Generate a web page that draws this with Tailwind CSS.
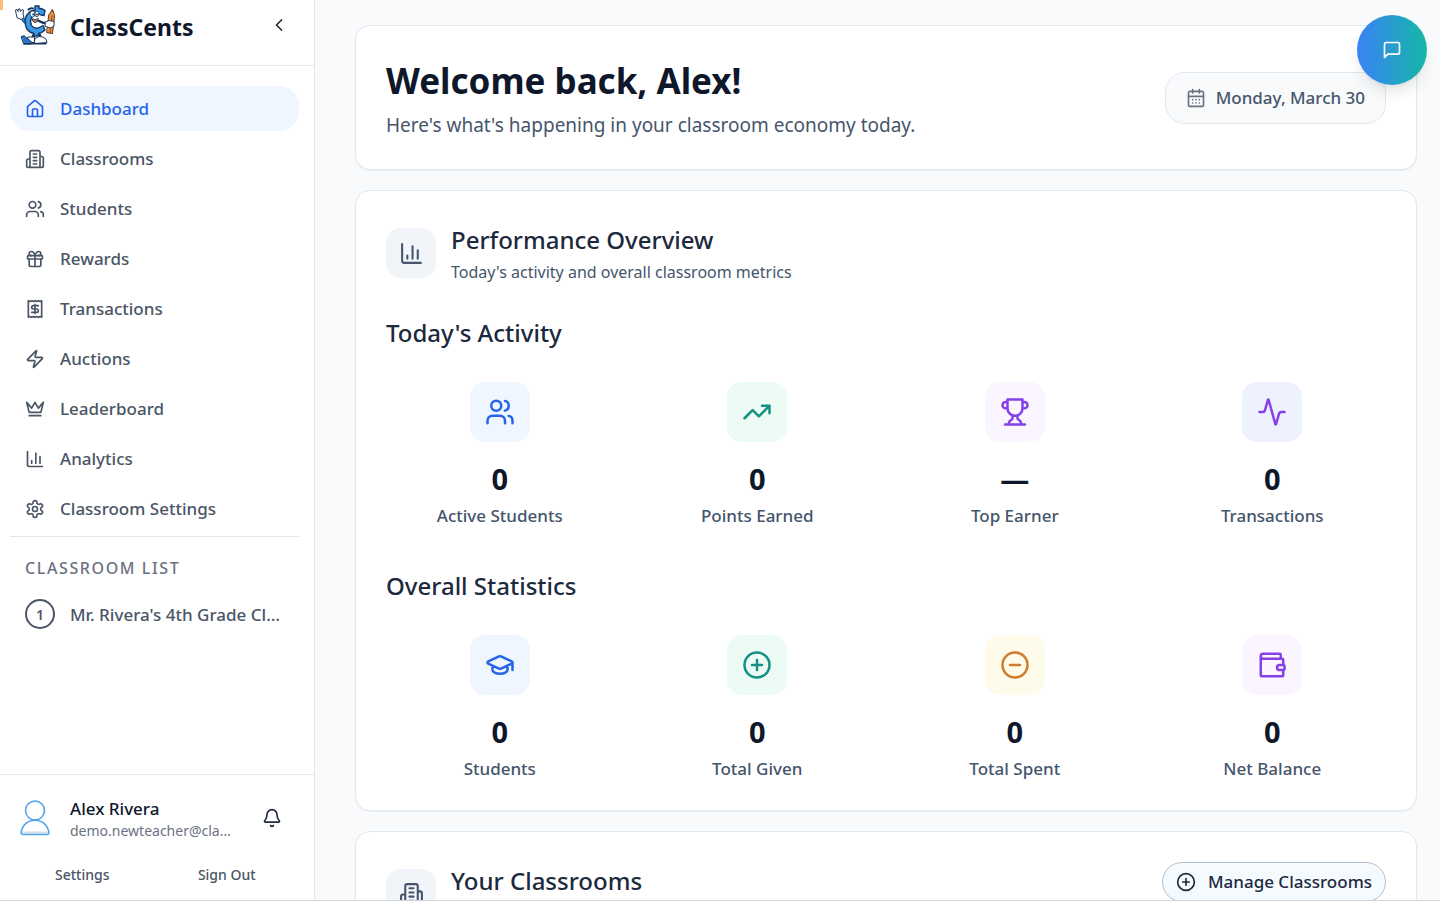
<!DOCTYPE html>
<html lang="en">
<head>
    <meta charset="UTF-8" />
    <meta name="viewport" content="width=device-width, initial-scale=1.0" />
    <title>ClassCents - Dashboard</title>
    <script src="https://cdn.jsdelivr.net/npm/@tailwindcss/browser@4"></script>
</head>
<body class="h-screen overflow-hidden border-b border-gray-300 bg-slate-50 font-['Noto_Sans','Open_Sans',sans-serif] text-slate-900">

<!-- Icon set -->
<svg class="hidden" aria-hidden="true">
    <symbol id="i-home" viewBox="0 0 24 24"><path d="M15 21v-8a1 1 0 0 0-1-1h-4a1 1 0 0 0-1 1v8"/><path d="M3 10a2 2 0 0 1 .709-1.528l7-5.999a2 2 0 0 1 2.582 0l7 5.999A2 2 0 0 1 21 10v9a2 2 0 0 1-2 2H5a2 2 0 0 1-2-2z"/></symbol>
    <symbol id="i-building" viewBox="0 0 24 24"><path d="M6 22V4a2 2 0 0 1 2-2h8a2 2 0 0 1 2 2v18ZM6 12H4a2 2 0 0 0-2 2v6a2 2 0 0 0 2 2h2M18 9h2a2 2 0 0 1 2 2v9a2 2 0 0 1-2 2h-2M10 6h4M10 10h4M10 14h4M10 18h4"/></symbol>
    <symbol id="i-users" viewBox="0 0 24 24"><path d="M16 21v-2a4 4 0 0 0-4-4H6a4 4 0 0 0-4 4v2"/><circle cx="9" cy="7" r="4"/><path d="M22 21v-2a4 4 0 0 0-3-3.870M16 3.130a4 4 0 0 1 0 7.750"/></symbol>
    <symbol id="i-gift" viewBox="0 0 24 24"><rect x="3" y="8" width="18" height="4" rx="1"/><path d="M12 8v13M19 12v7a2 2 0 0 1-2 2H7a2 2 0 0 1-2-2v-7M7.500 8a2.500 2.500 0 0 1 0-5A4.800 8 0 0 1 12 8a4.800 8 0 0 1 4.500-5 2.500 2.500 0 0 1 0 5"/></symbol>
    <symbol id="i-receipt" viewBox="0 0 24 24"><path d="M4 2v20l2-1 2 1 2-1 2 1 2-1 2 1 2-1 2 1V2l-2 1-2-1-2 1-2-1-2 1-2-1-2 1ZM16 8h-6a2 2 0 1 0 0 4h4a2 2 0 1 1 0 4H8M12 17.500v-11"/></symbol>
    <symbol id="i-zap" viewBox="0 0 24 24"><path d="M4 14a1 1 0 0 1-.78-1.630l9.900-10.200a.5.5 0 0 1 .86.460l-1.920 6.020A1 1 0 0 0 13 10h7a1 1 0 0 1 .78 1.630l-9.900 10.200a.5.5 0 0 1-.86-.460l1.920-6.020A1 1 0 0 0 11 14z"/></symbol>
    <symbol id="i-crown" viewBox="0 0 24 24"><path d="m2 4 3 12h14l3-12-6 7-4-7-4 7-6-7zm3 16h14"/></symbol>
    <symbol id="i-chart" viewBox="0 0 24 24"><path d="M3 3v16a2 2 0 0 0 2 2h16M18 17V9M13 17V5M8 17v-3"/></symbol>
    <symbol id="i-gear" viewBox="0 0 24 24"><circle cx="12" cy="12" r="3"/><path d="M12.220 2h-.44a2 2 0 0 0-2 2v.18a2 2 0 0 1-1 1.730l-.43.25a2 2 0 0 1-2 0l-.15-.08a2 2 0 0 0-2.730.73l-.22.38a2 2 0 0 0 .73 2.730l.15.1a2 2 0 0 1 1 1.720v.51a2 2 0 0 1-1 1.740l-.15.09a2 2 0 0 0-.73 2.730l.22.38a2 2 0 0 0 2.730.73l.15-.08a2 2 0 0 1 2 0l.43.25a2 2 0 0 1 1 1.730V20a2 2 0 0 0 2 2h.44a2 2 0 0 0 2-2v-.18a2 2 0 0 1 1-1.730l.43-.25a2 2 0 0 1 2 0l.15.08a2 2 0 0 0 2.730-.73l.22-.39a2 2 0 0 0-.73-2.730l-.15-.08a2 2 0 0 1-1-1.740v-.5a2 2 0 0 1 1-1.740l.15-.09a2 2 0 0 0 .73-2.730l-.22-.38a2 2 0 0 0-2.730-.73l-.15.08a2 2 0 0 1-2 0l-.43-.25a2 2 0 0 1-1-1.730V4a2 2 0 0 0-2-2z"/></symbol>
    <symbol id="i-left" viewBox="0 0 24 24"><path d="m15 18-6-6 6-6"/></symbol>
    <symbol id="i-bell" viewBox="0 0 24 24"><path d="M10.268 21a2 2 0 0 0 3.464 0M3.262 15.326A1 1 0 0 0 4 17h16a1 1 0 0 0 .74-1.673C19.410 13.956 18 12.499 18 8A6 6 0 0 0 6 8c0 4.499-1.411 5.956-2.738 7.326"/></symbol>
    <symbol id="i-calendar" viewBox="0 0 24 24"><rect x="3" y="4" width="18" height="18" rx="2"/><path d="M8 2v4M16 2v4M3 10h18M8 14h.01M12 14h.01M16 14h.01M8 18h.01M12 18h.01M16 18h.01"/></symbol>
    <symbol id="i-chat" viewBox="0 0 24 24"><path d="M21 15a2 2 0 0 1-2 2H7l-4 4V5a2 2 0 0 1 2-2h14a2 2 0 0 1 2 2z"/></symbol>
    <symbol id="i-trend" viewBox="0 0 24 24"><path d="m22 7-8.500 8.500-5-5L2 17M16 7h6v6"/></symbol>
    <symbol id="i-trophy" viewBox="0 0 24 24"><path d="M6 9H4.500a2.500 2.500 0 0 1 0-5H6M18 9h1.500a2.500 2.500 0 0 0 0-5H18M4 22h16M10 14.660V17c0 .55-.47.98-.97 1.210C7.850 18.750 7 20.240 7 22M14 14.660V17c0 .55.47.98.97 1.210C16.150 18.750 17 20.240 17 22M18 2H6v7a6 6 0 0 0 12 0V2Z"/></symbol>
    <symbol id="i-activity" viewBox="0 0 24 24"><path d="M22 12h-2.480a2 2 0 0 0-1.930 1.460l-2.350 8.360a.25.25 0 0 1-.48 0L9.240 2.180a.25.25 0 0 0-.48 0l-2.350 8.360A2 2 0 0 1 4.490 12H2"/></symbol>
    <symbol id="i-cap" viewBox="0 0 24 24"><path d="M21.420 10.922a1 1 0 0 0-.019-1.838L12.830 5.180a2 2 0 0 0-1.660 0L2.600 9.080a1 1 0 0 0 0 1.832l8.570 3.908a2 2 0 0 0 1.660 0zM22 10v6M6 12.500V16a6 3 0 0 0 12 0v-3.500"/></symbol>
    <symbol id="i-plus" viewBox="0 0 24 24"><circle cx="12" cy="12" r="10"/><path d="M8 12h8M12 8v8"/></symbol>
    <symbol id="i-minus" viewBox="0 0 24 24"><circle cx="12" cy="12" r="10"/><path d="M8 12h8"/></symbol>
    <symbol id="i-wallet" viewBox="0 0 24 24"><path d="M19 7V4a1 1 0 0 0-1-1H5a2 2 0 0 0 0 4h15a1 1 0 0 1 1 1v4h-3a2 2 0 0 0 0 4h3a1 1 0 0 0 1-1v-2a1 1 0 0 0-1-1M3 5v15a1 1 0 0 0 1 1h16a1 1 0 0 0 1-1v-4"/></symbol>
</svg>

<div class="flex h-full">
    <!-- Sidebar -->
    <aside class="flex w-[315px] shrink-0 flex-col border-r border-gray-200 bg-white">
        <div class="relative flex h-[66px] shrink-0 items-start justify-between border-b border-gray-200 pr-[25px] pl-[15px]">
            <span class="absolute top-0 left-0 h-[10px] w-[3px] bg-[#fdba74]"></span>
            <div class="flex items-start gap-[15px] pt-[5px]">
                <!-- Mascot: cent coin holding a pencil -->
                <svg class="size-10" viewBox="0 0 40 40" fill="none" stroke-linecap="round" stroke-linejoin="round" role="img" aria-label="ClassCents mascot">
                    <path d="M7 12q2 6 8 7" stroke="#17365f" stroke-width="3.500"/>
                    <path d="M7 12q2 6 8 7" stroke="#3b9ae8" stroke-width="1.500"/>
                    <path d="M1 8L.5 5 2 4.500 3 6.500 3.300 4H5l.5 2.500L7 4.500l1.500.7L8 9l1 3.500L6 14.500 2.500 13z" fill="#fff" stroke="#1e3a5f"/>
                    <path d="M20 3.500V1h4v2.200q3.500.3 6 2.300l-1 5-3-.5q-5-3-8 .5-3.500 4-2 9 2.500 4.500 7 3.500 2.500-.7 5-2.500l2 4.500q-3 3-6.500 3.500v2.500h-4.500v-2.500q-7-1.500-8.500-8.500-1.500-8 3.500-12.500 2.500-2.500 6-2z" fill="#3b9ae8" stroke="#17365f" stroke-width="1.400"/>
                    <path d="M13.500 4.500q2-2 4.500-1" stroke="#17365f" stroke-width="2"/>
                    <ellipse cx="17.500" cy="9" rx="2.500" ry="3" fill="#fff" stroke="#17365f" stroke-width=".8"/>
                    <ellipse cx="22" cy="9" rx="2" ry="2.800" fill="#fff" stroke="#17365f" stroke-width=".8"/>
                    <circle cx="18.200" cy="9.500" r="1" fill="#17365f"/><circle cx="22" cy="9.500" r="1" fill="#17365f"/>
                    <path d="M17 14q3.500 1.500 6.500-.5-.5 4-3.500 4-2.500-.5-3-3.500z" fill="#e8743b" stroke="#17365f" stroke-width=".9"/>
                    <path d="M24 16q5 3 9 2" stroke="#17365f" stroke-width="2.500"/>
                    <path d="M34 9.500L37.500 4.500l2 6-2 18-5.500-.8z" fill="#f2933f" stroke="#5b3420"/>
                    <path d="M37 10.500l-2 17.500M36.500 5l1.500 2" stroke="#8c4a20"/>
                    <path d="M30.500 17l3.500-1.500 5 1v4.500l-3.500 2-5-1.500z" fill="#fff" stroke="#1e3a5f"/>
                    <path d="M18 30.500v3M25 30v3" stroke="#17365f" stroke-width="2.500"/>
                    <path d="M13 32h6.500v5.500h-6zM20 33.500q4-3.500 8-1.500 4 1.500 4 5.500l-12 1z" fill="#fff" stroke="#1e3a5f"/>
                    <path d="M6.500 31.500l2.500-.8 8.500 7-1 1.300h-7.500z" fill="#2f73c8" stroke="#17365f"/>
                    <path d="M9 38.700h22" stroke="#17365f" stroke-width="1.500"/>
                </svg>
                <span class="text-[23px] leading-[44px] font-bold">ClassCents</span>
            </div>
            <button type="button" class="mt-[15px] text-gray-800" aria-label="Collapse sidebar">
                <svg class="size-5" fill="none" stroke="currentColor" stroke-width="2" stroke-linecap="round" stroke-linejoin="round"><use href="#i-left"/></svg>
            </button>
        </div>

        <nav class="flex-1 pt-5 pr-[15px] pl-[10px] text-[17px] leading-[25px] font-medium text-gray-600" aria-label="Main">
            <div class="flex flex-col gap-[5px]">
                <a href="#" class="flex items-center gap-[15px] rounded-[20px] bg-[#eff6ff] px-[15px] py-[10px] text-[#2563eb]" aria-current="page"><svg class="size-5" fill="none" stroke="currentColor" stroke-width="2" stroke-linecap="round" stroke-linejoin="round"><use href="#i-home"/></svg>Dashboard</a>
                <a href="#" class="flex items-center gap-[15px] rounded-[20px] px-[15px] py-[10px]"><svg class="size-5" fill="none" stroke="currentColor" stroke-width="2" stroke-linecap="round" stroke-linejoin="round"><use href="#i-building"/></svg>Classrooms</a>
                <a href="#" class="flex items-center gap-[15px] rounded-[20px] px-[15px] py-[10px]"><svg class="size-5" fill="none" stroke="currentColor" stroke-width="2" stroke-linecap="round" stroke-linejoin="round"><use href="#i-users"/></svg>Students</a>
                <a href="#" class="flex items-center gap-[15px] rounded-[20px] px-[15px] py-[10px]"><svg class="size-5" fill="none" stroke="currentColor" stroke-width="2" stroke-linecap="round" stroke-linejoin="round"><use href="#i-gift"/></svg>Rewards</a>
                <a href="#" class="flex items-center gap-[15px] rounded-[20px] px-[15px] py-[10px]"><svg class="size-5" fill="none" stroke="currentColor" stroke-width="2" stroke-linecap="round" stroke-linejoin="round"><use href="#i-receipt"/></svg>Transactions</a>
                <a href="#" class="flex items-center gap-[15px] rounded-[20px] px-[15px] py-[10px]"><svg class="size-5" fill="none" stroke="currentColor" stroke-width="2" stroke-linecap="round" stroke-linejoin="round"><use href="#i-zap"/></svg>Auctions</a>
                <a href="#" class="flex items-center gap-[15px] rounded-[20px] px-[15px] py-[10px]"><svg class="size-5" fill="none" stroke="currentColor" stroke-width="2" stroke-linecap="round" stroke-linejoin="round"><use href="#i-crown"/></svg>Leaderboard</a>
                <a href="#" class="flex items-center gap-[15px] rounded-[20px] px-[15px] py-[10px]"><svg class="size-5" fill="none" stroke="currentColor" stroke-width="2" stroke-linecap="round" stroke-linejoin="round"><use href="#i-chart"/></svg>Analytics</a>
                <a href="#" class="flex items-center gap-[15px] rounded-[20px] px-[15px] py-[10px]"><svg class="size-5" fill="none" stroke="currentColor" stroke-width="2" stroke-linecap="round" stroke-linejoin="round"><use href="#i-gear"/></svg>Classroom Settings</a>
            </div>
            <div class="mt-[5px] border-t border-gray-200 pt-5">
                <h2 class="px-[15px] text-[16px] leading-[22px] font-medium tracking-widest text-gray-500 uppercase">Classroom List</h2>
                <a href="#" class="mt-[10px] flex items-center gap-[15px] px-[15px] py-[10px]">
                    <span class="flex size-[30px] shrink-0 items-center justify-center rounded-full border-2 border-gray-600 text-[14px] font-semibold">1</span>
                    <span class="truncate">Mr. Rivera's 4th Grade Class</span>
                </a>
            </div>
        </nav>

        <div class="shrink-0 border-t border-gray-200 px-5 pt-[23px] pb-[10px]">
            <div class="flex items-start">
                <svg class="h-[38px] w-[30px] shrink-0" viewBox="0 0 30 38" fill="none" stroke="#4ea3ea" stroke-width="1.500" stroke-linecap="round" stroke-linejoin="round">
                    <path d="M23 17q1.500-2 1.500-5" stroke="#d6dbe8" stroke-width="2"/>
                    <path d="M3 34.500h24" stroke="#d6dbe8" stroke-width="2"/>
                    <circle cx="15" cy="12.500" r="9.500"/>
                    <path d="M1 35C2 27 8 22.300 15 22.300S28 27 29 35q-.3 1.500-2 1.500H3q-1.700 0-2-1.500z"/>
                </svg>
                <div class="ml-5 w-[165px]">
                    <p class="truncate text-[17px] leading-[22px] font-medium">Alex Rivera</p>
                    <p class="truncate text-[14px] leading-[22px] text-gray-500">demo.newteacher@classcents.com</p>
                </div>
                <button type="button" class="ml-[27px] flex h-10 items-center text-gray-800" aria-label="Notifications">
                    <svg class="size-5" fill="none" stroke="currentColor" stroke-width="2" stroke-linecap="round" stroke-linejoin="round"><use href="#i-bell"/></svg>
                </button>
            </div>
            <div class="mt-[18px] grid grid-cols-2 gap-5 pr-[5px] text-[14px] leading-[30px] font-medium text-gray-600">
                <button type="button">Settings</button>
                <button type="button">Sign Out</button>
            </div>
        </div>
    </aside>

    <!-- Main content -->
    <main class="flex min-w-0 flex-1 flex-col gap-5 overflow-hidden pt-[25px] pr-[23px] pl-10">
        <section class="flex shrink-0 items-center justify-between rounded-[15px] border border-slate-200 bg-white p-[30px] shadow-xs">
            <div>
                <h1 class="text-[35px] leading-[50px] font-bold">Welcome back, Alex!</h1>
                <p class="mt-[5px] text-[19px] leading-[28px] text-slate-600">Here's what's happening in your classroom economy today.</p>
            </div>
            <div class="flex items-center gap-[10px] rounded-[20px] border border-slate-200 bg-slate-50 px-5 py-3 text-[17px] leading-[26px] font-medium text-slate-600">
                <svg class="size-5 text-gray-500" fill="none" stroke="currentColor" stroke-width="2" stroke-linecap="round" stroke-linejoin="round"><use href="#i-calendar"/></svg>
                <time datetime="2026-03-30">Monday, March 30</time>
            </div>
        </section>

        <section class="shrink-0 rounded-[15px] border border-slate-200 bg-white p-[30px] shadow-xs">
            <div class="flex items-center gap-[15px]">
                <span class="flex size-[50px] items-center justify-center rounded-[15px] bg-slate-100 text-slate-600"><svg class="size-[25px]" fill="none" stroke="currentColor" stroke-width="2" stroke-linecap="round" stroke-linejoin="round"><use href="#i-chart"/></svg></span>
                <div>
                    <h2 class="text-[24px] leading-[38px] font-medium text-slate-800">Performance Overview</h2>
                    <p class="text-[16px] leading-[26px] text-slate-600">Today's activity and overall classroom metrics</p>
                </div>
            </div>

            <h3 class="mt-[29px] text-[24px] leading-[38px] font-medium text-slate-800">Today's Activity</h3>
            <div class="mt-[30px] grid grid-cols-4 gap-[30px] text-center">
                <div>
                    <span class="mx-auto flex size-[60px] items-center justify-center rounded-[15px] bg-[#eff6ff] text-[#2563eb]"><svg class="size-[30px]" fill="none" stroke="currentColor" stroke-width="2" stroke-linecap="round" stroke-linejoin="round"><use href="#i-users"/></svg></span>
                    <p class="mt-5 text-[29px] leading-[34px] font-bold">0</p>
                    <p class="mt-[9px] text-[17px] leading-[22px] font-medium text-slate-600">Active Students</p>
                </div>
                <div>
                    <span class="mx-auto flex size-[60px] items-center justify-center rounded-[15px] bg-[#ecfbf4] text-[#149084]"><svg class="size-[30px]" fill="none" stroke="currentColor" stroke-width="2" stroke-linecap="round" stroke-linejoin="round"><use href="#i-trend"/></svg></span>
                    <p class="mt-5 text-[29px] leading-[34px] font-bold">0</p>
                    <p class="mt-[9px] text-[17px] leading-[22px] font-medium text-slate-600">Points Earned</p>
                </div>
                <div>
                    <span class="mx-auto flex size-[60px] items-center justify-center rounded-[15px] bg-[#faf5ff] text-[#8540ea]"><svg class="size-[30px]" fill="none" stroke="currentColor" stroke-width="2" stroke-linecap="round" stroke-linejoin="round"><use href="#i-trophy"/></svg></span>
                    <p class="mt-5 text-[29px] leading-[34px] font-bold">—</p>
                    <p class="mt-[9px] text-[17px] leading-[22px] font-medium text-slate-600">Top Earner</p>
                </div>
                <div>
                    <span class="mx-auto flex size-[60px] items-center justify-center rounded-[15px] bg-[#eef2ff] text-[#8540ea]"><svg class="size-[30px]" fill="none" stroke="currentColor" stroke-width="2" stroke-linecap="round" stroke-linejoin="round"><use href="#i-activity"/></svg></span>
                    <p class="mt-5 text-[29px] leading-[34px] font-bold">0</p>
                    <p class="mt-[9px] text-[17px] leading-[22px] font-medium text-slate-600">Transactions</p>
                </div>
            </div>

            <h3 class="mt-10 text-[24px] leading-[38px] font-medium text-slate-800">Overall Statistics</h3>
            <div class="mt-[30px] grid grid-cols-4 gap-[30px] text-center">
                <div>
                    <span class="mx-auto flex size-[60px] items-center justify-center rounded-[15px] bg-[#eff6ff] text-[#2563eb]"><svg class="size-[30px]" fill="none" stroke="currentColor" stroke-width="2" stroke-linecap="round" stroke-linejoin="round"><use href="#i-cap"/></svg></span>
                    <p class="mt-5 text-[29px] leading-[34px] font-bold">0</p>
                    <p class="mt-[9px] text-[17px] leading-[22px] font-medium text-slate-600">Students</p>
                </div>
                <div>
                    <span class="mx-auto flex size-[60px] items-center justify-center rounded-[15px] bg-[#ecfbf4] text-[#149084]"><svg class="size-[30px]" fill="none" stroke="currentColor" stroke-width="2" stroke-linecap="round" stroke-linejoin="round"><use href="#i-plus"/></svg></span>
                    <p class="mt-5 text-[29px] leading-[34px] font-bold">0</p>
                    <p class="mt-[9px] text-[17px] leading-[22px] font-medium text-slate-600">Total Given</p>
                </div>
                <div>
                    <span class="mx-auto flex size-[60px] items-center justify-center rounded-[15px] bg-[#fffbeb] text-[#d07c2c]"><svg class="size-[30px]" fill="none" stroke="currentColor" stroke-width="2" stroke-linecap="round" stroke-linejoin="round"><use href="#i-minus"/></svg></span>
                    <p class="mt-5 text-[29px] leading-[34px] font-bold">0</p>
                    <p class="mt-[9px] text-[17px] leading-[22px] font-medium text-slate-600">Total Spent</p>
                </div>
                <div>
                    <span class="mx-auto flex size-[60px] items-center justify-center rounded-[15px] bg-[#faf5ff] text-[#8540ea]"><svg class="size-[30px]" fill="none" stroke="currentColor" stroke-width="2" stroke-linecap="round" stroke-linejoin="round"><use href="#i-wallet"/></svg></span>
                    <p class="mt-5 text-[29px] leading-[34px] font-bold">0</p>
                    <p class="mt-[9px] text-[17px] leading-[22px] font-medium text-slate-600">Net Balance</p>
                </div>
            </div>
        </section>

        <section class="flex shrink-0 items-start justify-between rounded-[15px] border border-slate-200 bg-white p-[30px] shadow-xs">
            <div class="flex items-center gap-[15px]">
                <span class="flex size-[50px] items-center justify-center rounded-[15px] bg-slate-100 text-slate-600"><svg class="size-[25px]" fill="none" stroke="currentColor" stroke-width="2" stroke-linecap="round" stroke-linejoin="round"><use href="#i-building"/></svg></span>
                <div>
                    <h2 class="text-[24px] leading-[38px] font-medium text-slate-800">Your Classrooms</h2>
                    <p class="text-[16px] leading-[26px] text-slate-600">Manage and monitor your classes</p>
                </div>
            </div>
            <button type="button" class="flex items-center gap-3 rounded-[20px] border border-[#b3bec9] bg-[#f5faff] px-[13px] py-[6px] text-[17px] leading-[26px] font-medium text-slate-800">
                <svg class="size-5" fill="none" stroke="currentColor" stroke-width="2" stroke-linecap="round" stroke-linejoin="round"><use href="#i-plus"/></svg>
                Manage Classrooms
            </button>
        </section>
    </main>
</div>

<!-- Floating chat button -->
<button type="button" class="fixed top-[15px] right-[13px] flex size-[70px] items-center justify-center rounded-full bg-linear-to-r/srgb from-[#3b82f6] to-[#14b8a6] text-white shadow-lg" aria-label="Open chat">
    <svg class="size-5" fill="none" stroke="currentColor" stroke-width="2" stroke-linecap="round" stroke-linejoin="round"><use href="#i-chat"/></svg>
</button>
</body>
</html>
